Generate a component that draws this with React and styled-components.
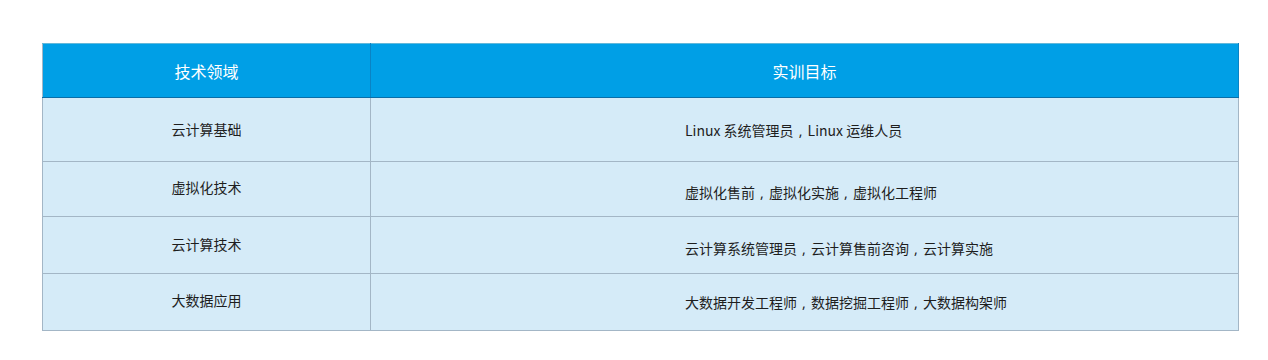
import React from "react";
import styled, { createGlobalStyle } from "styled-components";

const GlobalStyle = createGlobalStyle`
  body {
    margin: 0;
    background: #ffffff;
    font-family: "Noto Sans CJK SC", "Noto Sans", sans-serif;
  }
`;

const Page = styled.div`
  padding: 43px 30px 0 42px;
`;

const Table = styled.table`
  width: 1197px;
  border-collapse: collapse;
  table-layout: fixed;
  border: 1px solid #a3b6c6;
`;

const HeadCell = styled.th`
  height: 53px;
  padding: 0;
  background: #009fe6;
  color: #ffffff;
  font-size: 16px;
  font-weight: 400;
  text-align: center;
  border-right: 1px solid #0a83c4;
  border-bottom: 1px solid #0a6ea8;
  border-top: 1px solid #62b8da;
`;

const Row = styled.tr`
  height: ${p => p.h}px;
  background: #d5ebf8;
  border-top: 1px solid #a3b6c6;
`;

const AreaCell = styled.td`
  padding: 0 0 ${p => p.shift || 0}px 0;
  text-align: center;
  font-size: 14px;
  color: #1e1e1e;
  border-right: 1px solid #a3b6c6;
`;

const GoalCell = styled.td`
  padding: ${p => p.shift || 0}px 0 0 314px;
  text-align: left;
  font-size: 14px;
  color: #1e1e1e;
`;

// comma sits in the middle of a full-width slot, on the baseline
const Comma = styled.span`
  display: inline-block;
  width: 14px;
  text-align: center;
  font-family: "Noto Sans", sans-serif;
`;

const rows = [
  { area: "云计算基础", goal: ["Linux 系统管理员", "Linux 运维人员"], h: 64, a: 2, g: 0 },
  { area: "虚拟化技术", goal: ["虚拟化售前", "虚拟化实施", "虚拟化工程师"], h: 55, a: 4, g: 5 },
  { area: "云计算技术", goal: ["云计算系统管理员", "云计算售前咨询", "云计算实施"], h: 57, a: 3, g: 6 },
  { area: "大数据应用", goal: ["大数据开发工程师", "数据挖掘工程师", "大数据构架师"], h: 57, a: 4, g: 0 },
];

export default function App() {
  return (
    <Page>
      <GlobalStyle />
      <Table>
        <colgroup>
          <col style={{ width: "328px" }} />
          <col />
        </colgroup>
        <thead>
          <tr>
            <HeadCell>技术领域</HeadCell>
            <HeadCell>实训目标</HeadCell>
          </tr>
        </thead>
        <tbody>
          {rows.map(r => (
            <Row key={r.area} h={r.h}>
              <AreaCell shift={r.a}>{r.area}</AreaCell>
              <GoalCell shift={r.g}>
                {r.goal.map((t, i) => (
                  <React.Fragment key={t}>
                    {i > 0 && <Comma>,</Comma>}
                    {t}
                  </React.Fragment>
                ))}
              </GoalCell>
            </Row>
          ))}
        </tbody>
      </Table>
    </Page>
  );
}
